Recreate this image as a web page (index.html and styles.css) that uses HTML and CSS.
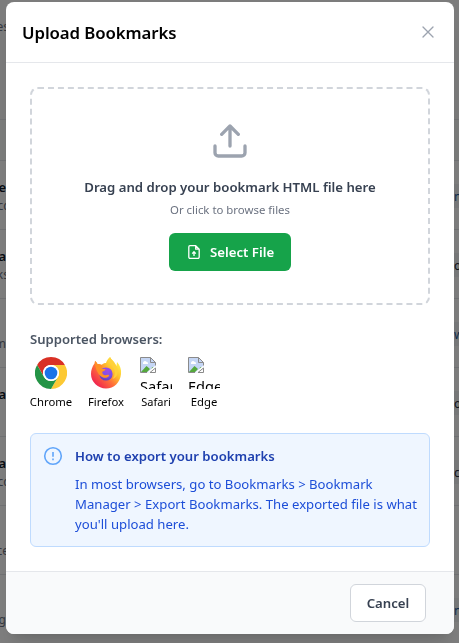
FILE: index.html
```html
<!DOCTYPE html>
<html lang="en">
<head>
<meta charset="utf-8">
<title>Upload Bookmarks</title>
<link rel="stylesheet" href="styles.css">
</head>
<body>
<div class="page" aria-hidden="true">
  <div class="page-head"><span class="cell muted">es</span></div>
  <div class="page-bar"></div>
  <div class="row"><div class="cell"><b>e</b><span class="wide">cc</span></div><span class="chip link">n</span></div>
  <div class="row"><div class="cell"><b>a</b><span class="wide">ks</span></div><span class="chip">o</span></div>
  <div class="row"><div class="cell"><b>&nbsp;</b><span>m</span></div><span class="chip link">w</span></div>
  <div class="row"><div class="cell"><b>a</b><span>&nbsp;</span></div><span class="chip">o</span></div>
  <div class="row"><div class="cell"><b>a</b><span class="wide">cc</span></div><span class="chip">c</span></div>
  <div class="row"><div class="cell"><b>&nbsp;</b><span class="wide">ce</span></div></div>
  <div class="row"><div class="cell"><b>&nbsp;</b><span>g</span></div><span class="chip link">n</span></div>
</div>
<div class="overlay">
  <section class="modal" role="dialog" aria-labelledby="title">
    <header class="modal-head">
      <h2 id="title">Upload Bookmarks</h2>
      <svg class="close" viewBox="0 0 24 24"><path d="M4.5 4.5l15 15M19.5 4.5l-15 15"/></svg>
    </header>
    <div class="modal-body">
      <div class="dropzone">
        <svg class="upload" viewBox="0 0 24 24"><path d="M21 15v4a2 2 0 0 1-2 2H5a2 2 0 0 1-2-2v-4M17 8l-5-5-5 5M12 3v12"/></svg>
        <p class="drop-title">Drag and drop your bookmark HTML file here</p>
        <p class="drop-hint">Or click to browse files</p>
        <button class="select"><svg viewBox="0 0 16 16"><path d="M9.7 1.7H4a1.2 1.2 0 0 0-1.2 1.2v10.200a1.200 1.200 0 0 0 1.200 1.200h8a1.200 1.200 0 0 0 1.200-1.200V5.200zM9.700 1.700v3.500h3.500M8 12V8M6.200 9.600L8 7.800l1.800 1.800"/></svg><span>Select File</span></button>
      </div>
      <h3 class="supported">Supported browsers:</h3>
      <ul class="browsers">
        <li>
          <svg class="logo" viewBox="0 0 48 48">
            <path fill="#d93025" d="M24 0a24 24 0 0 1 20.800 12H24a12 12 0 0 0-10.400 18L3.200 12A24 24 0 0 1 24 0z"/>
            <path fill="#fcc934" d="M44.800 12A24 24 0 0 1 24 48l10.400-18A12 12 0 0 0 24 12z"/>
            <path fill="#249446" d="M3.200 12l10.400 18A12 12 0 0 0 34.400 30L24 48A24 24 0 0 1 3.200 12z"/>
            <circle cx="24" cy="24" r="12" fill="#fff"/><circle cx="24" cy="24" r="9.500" fill="#1a73e8"/>
          </svg>
          <span class="chrome">Chrome</span>
        </li>
        <li>
          <svg class="logo" viewBox="0 0 32 32">
            <defs>
              <linearGradient id="flame" x1=".9" y1=".1" x2=".15" y2=".85"><stop offset="0" stop-color="#fff44f"/><stop offset=".35" stop-color="#ffc12c"/><stop offset=".62" stop-color="#ff7139"/><stop offset="1" stop-color="#f0274f"/></linearGradient>
              <radialGradient id="globe" cx=".6" cy=".2" r=".85"><stop offset="0" stop-color="#a14be8"/><stop offset=".6" stop-color="#7b4fe6"/><stop offset="1" stop-color="#5a3cb5"/></radialGradient>
            </defs>
            <path fill="url(#flame)" d="M20 0c1.500 3 3.700 3.700 5 6.500l1.500 2.500.5-4c3.300 3.500 4.500 7.500 4 12C30.300 25.500 24 31.500 16 31.500S1 25 1 17c0-4 1.300-7.500 3.500-10.500L5 4c1 .7 1.700 1.700 2.300 3.200 1.500-.4 3-.2 4.500.5 1-1.200 2.500-1.700 4.200-1.700.8-2.500 2-4.500 4-6z"/>
            <circle cx="16" cy="17" r="6.600" fill="url(#globe)"/>
            <path fill="#ff9125" d="M5 4c1.300.8 2.300 2 2.800 3.500 1.800-.3 3.400.2 4.600 1.400-.5 1-.6 2-.4 3.100h3.500c0 1.500-1.800 2-3.200 2.800-.2 2 .8 3.200 2.500 3.400 2 .2 3-1 4.500.2-1.500 2.800-6 3.200-8.800.6C7 16 4.500 9 5 4z"/>
            <path fill="#ffd13a" d="M20 0c-1 4.500.8 7 3 10 3 4 2 9-.5 12 3-.7 5-3.500 5.300-6.500.2-3-1.300-6.200-3.300-9.500C23 3.700 21.500 3 20 0z"/>
          </svg>
          <span class="firefox">Firefox</span>
        </li>
        <li>
          <div class="missing"><svg viewBox="0 0 16 16"><path fill="#c5d6f5" d="M.5.5h10l5 5v5L10 15.500H.500z"/><path fill="#fff" d="M3 6.500a2 2 0 0 1 3.500-1.700A1.800 1.800 0 0 1 8 7H3z"/><path fill="#55a83c" d="M1 15l5.500-6L10 12l-3 3zM12 10l2.500 1-3 2z"/><path fill="#fff" d="M7 15.500l8.500-7v2l-5 5z"/><path fill="none" stroke="#8a8a8a" d="M7 15.500H.500V.5h10l5 5v3M10.500.5v5h5M10 15.500h5.500V11z"/></svg><span>Safari</span></div>
          <span class="safari">Safari</span>
        </li>
        <li>
          <div class="missing"><svg viewBox="0 0 16 16"><path fill="#c5d6f5" d="M.5.5h10l5 5v5L10 15.500H.500z"/><path fill="#fff" d="M3 6.500a2 2 0 0 1 3.500-1.700A1.800 1.800 0 0 1 8 7H3z"/><path fill="#55a83c" d="M1 15l5.500-6L10 12l-3 3zM12 10l2.500 1-3 2z"/><path fill="#fff" d="M7 15.500l8.500-7v2l-5 5z"/><path fill="none" stroke="#8a8a8a" d="M7 15.500H.500V.5h10l5 5v3M10.500.5v5h5M10 15.500h5.500V11z"/></svg><span>Edge</span></div>
          <span class="edge">Edge</span>
        </li>
      </ul>
      <div class="info">
        <svg viewBox="0 0 20 20"><circle cx="10" cy="10" r="8.300"/><path d="M10 6v4.800M10 12.600v1.600"/></svg>
        <div>
          <h3>How to export your bookmarks</h3>
          <p>In most browsers, go to Bookmarks &gt; Bookmark<br>Manager &gt; Export Bookmarks. The exported file is what<br>you'll upload here.</p>
        </div>
      </div>
    </div>
    <footer class="modal-foot"><button class="cancel">Cancel</button></footer>
  </section>
</div>
</body>
</html>
```
FILE: styles.css
```css
* { box-sizing: border-box; margin: 0; padding: 0; }
body { width: 459px; height: 643px; overflow: hidden; font-family: "Noto Sans", "Open Sans", sans-serif; font-size: 13.2px; line-height: 20px; background: #fff; }
button { font: inherit; }
svg { display: block; flex: none; }

.page { height: 643px; overflow: hidden; color: #111827; }
.page-head { height: 120px; padding-top: 18px; background: #f8f9f9; border-bottom: 1px solid #e5e7eb; }
.page-bar { height: 41px; background: #f8faf9; border-bottom: 1px solid #e5e7eb; }
.row { display: flex; justify-content: space-between; height: 69px; padding-top: 16px; border-bottom: 1px solid #e5e7eb; }
.cell { display: flex; flex-direction: column; align-items: flex-end; width: 6px; }
.cell b { font-weight: 600; font-size: 13px; }
.cell span, .muted { color: #6b7280; font-size: 12px; line-height: 18px; }
.cell .wide { margin-right: -3px; }
.cell.muted { width: 9px; }
.chip { width: 5px; height: 24px; margin-top: 7px; overflow: hidden; background: #f3f4f6; color: #1f2937; font-size: 12px; line-height: 25px; }
.chip.link { color: #1d5c9e; }

.overlay { position: fixed; inset: 0; padding: 2px 5px 9px 6px; background: rgba(0, 0, 0, .5); }
.modal { display: flex; flex-direction: column; width: 448px; height: 632px; overflow: hidden; background: #fff; border-radius: 8px; box-shadow: 0 20px 25px -5px rgba(0, 0, 0, .1), 0 8px 10px -6px rgba(0, 0, 0, .1); }
.modal-head { display: flex; align-items: center; justify-content: space-between; height: 61px; padding: 2px 18px 0 16px; border-bottom: 1px solid #e5e7eb; }
.modal-head h2 { font-size: 16.8px; font-weight: 600; letter-spacing: -.08px; line-height: 28px; color: #000; }
.close { width: 16px; height: 16px; margin-top: -2px; fill: none; stroke: #9ca3af; stroke-width: 2; stroke-linecap: round; }
.modal-body { flex: 1; padding: 24px; }

.dropzone { display: flex; flex-direction: column; align-items: center; height: 218px; padding-top: 32px; border: 2px dashed #d1d5db; border-radius: 8px; }
.upload { width: 40px; height: 40px; fill: none; stroke: #9ca3af; stroke-width: 2; stroke-linecap: round; stroke-linejoin: round; }
.drop-title { margin-top: 16px; font-weight: 600; color: #374151; white-space: nowrap; }
.drop-hint { margin-top: 5px; font-size: 11.4px; line-height: 16px; color: #6b7280; }
.select { display: flex; align-items: center; gap: 8px; width: 122px; height: 38px; margin-top: 15px; padding-left: 17px; border: 0; border-radius: 6px; background: #16a34a; color: #fff; font-weight: 600; white-space: nowrap; }
.select svg { width: 16px; height: 16px; fill: none; stroke: #fff; stroke-width: 1.3; stroke-linejoin: round; }

.supported { margin-top: 24px; font-size: 13.1px; font-weight: 600; color: #4b5563; }
.browsers { display: flex; gap: 16px; margin-top: 8px; list-style: none; }
.browsers li { display: flex; flex-direction: column; align-items: center; width: 32px; }
.browsers li:nth-child(1) { width: 42px; }
.browsers li:nth-child(2) { width: 36px; }
.browsers li > span { margin-top: 5px; font-size: 11.3px; line-height: 16px; white-space: nowrap; color: #000; }
.browsers li > .safari { font-size: 11px; }
.logo { width: 32px; height: 32px; }
.missing { width: 32px; height: 32px; overflow: hidden; font-size: 14.6px; line-height: 26px; color: #000; }
.missing svg { width: 16px; height: 16px; }
.missing span { display: block; }

.info { display: flex; gap: 12px; height: 114px; margin-top: 23px; padding: 12px 0 0 12px; border: 1px solid #bfdbfe; border-radius: 6px; background: #eff6ff; }
.info svg { width: 20px; height: 20px; fill: none; stroke: #60a5fa; stroke-width: 1.600; }
.info h3 { font-size: 13.15px; font-weight: 600; color: #1e40af; }
.info p { margin-top: 8px; font-size: 13.15px; color: #1d4ed8; white-space: nowrap; }

.modal-foot { display: flex; justify-content: flex-end; height: 63px; padding: 12px 28px 0 0; border-top: 1px solid #e5e7eb; background: #f9fafb; }
.cancel { width: 76px; height: 38px; border: 1px solid #d1d5db; border-radius: 6px; background: #fff; color: #374151; font-weight: 600; }
```
